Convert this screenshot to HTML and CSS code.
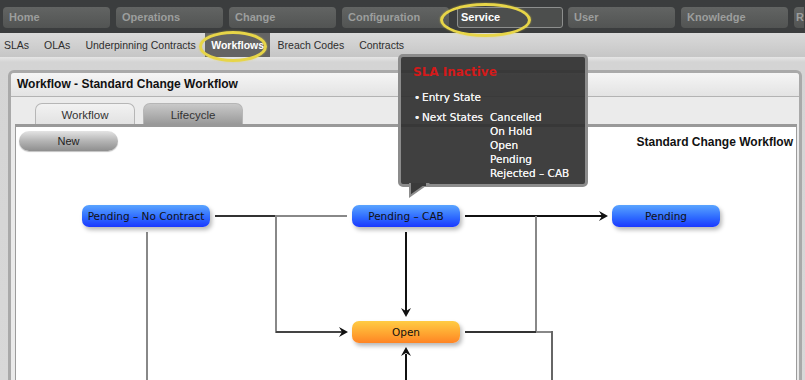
FILE: index.html
```html
<!DOCTYPE html>
<html lang="en">
<head>
    <meta charset="UTF-8">
    <title>Workflow - Standard Change Workflow</title>
    <link rel="stylesheet" href="styles.css">
</head>
<body>
    <div class="topnav">
        <div class="tab">Home</div>
        <div class="tab">Operations</div>
        <div class="tab">Change</div>
        <div class="tab">Configuration</div>
        <div class="tab active">Service</div>
        <div class="tab">User</div>
        <div class="tab">Knowledge</div>
        <div class="tab stub">R</div>
    </div>
    <div class="subnav">
        <span class="sub">SLAs</span>
        <span class="sub">OLAs</span>
        <span class="sub">Underpinning Contracts</span>
        <span class="sub current">Workflows</span>
        <span class="sub">Breach Codes</span>
        <span class="sub">Contracts</span>
    </div>

    <div class="main">
        <div class="panel">
            <div class="panel-head">Workflow - Standard Change Workflow</div>
            <div class="panel-body">
                <div class="tabs">
                    <div class="ptab on">Workflow</div>
                    <div class="ptab">Lifecycle</div>
                </div>
                <div class="content">
                    <div class="toolbar">
                        <button class="new-btn">New</button>
                        <span class="wf-name">Standard Change Workflow</span>
                    </div>
                    <div class="diagram">
                        <svg class="wires" width="780" height="229" viewBox="0 0 780 229">
                            <!-- from Pending - No Contract -->
                            <path d="M199 65H260" stroke="#333" stroke-width="2" fill="none"/>
                            <path d="M260 65H331" stroke="#888" stroke-width="2" fill="none"/>
                            <path d="M260 64V182" stroke="#888" stroke-width="2" fill="none"/>
                            <path d="M260 181H326" stroke="#444" stroke-width="2" fill="none"/>
                            <polygon points="332,181 323,176 326,181 323,186" fill="#111"/>
                            <path d="M131 81V229" stroke="#888" stroke-width="2" fill="none"/>
                            <!-- from Pending - CAB -->
                            <path d="M390 81V160" stroke="#111" stroke-width="2" fill="none"/>
                            <polygon points="390,166 385,157 390,160 395,157" fill="#111"/>
                            <path d="M449 65H586" stroke="#111" stroke-width="2" fill="none"/>
                            <polygon points="592,65 583,60 586,65 583,70" fill="#111"/>
                            <path d="M520 65V182" stroke="#888" stroke-width="2" fill="none"/>
                            <!-- from Open -->
                            <path d="M449 181H520" stroke="#333" stroke-width="2" fill="none"/>
                            <path d="M520 181H537" stroke="#888" stroke-width="2" fill="none"/>
                            <path d="M536 180V229" stroke="#666" stroke-width="2" fill="none"/>
                            <path d="M390 229V203" stroke="#111" stroke-width="2" fill="none"/>
                            <polygon points="390,196 385,205 390,202 395,205" fill="#111"/>
                        </svg>
                        <div class="node blue" style="left: 66px; top: 54px; width: 128px;">Pending &ndash; No Contract</div>
                        <div class="node blue" style="left: 336px; top: 54px; width: 108px;">Pending &ndash; CAB</div>
                        <div class="node blue" style="left: 596px; top: 54px; width: 108px;">Pending</div>
                        <div class="node orange" style="left: 336px; top: 170px; width: 108px;">Open</div>
                    </div>
                </div>
            </div>
        </div>
    </div>

    <div class="tooltip">
        <div class="tip-title">SLA Inactive</div>
        <div class="tip-row first"><span class="dot">&bull;</span>Entry State</div>
        <div class="tip-row states">
            <span class="label"><span class="dot">&bull;</span>Next States</span>
            <ul class="state-list">
                <li>Cancelled</li>
                <li>On Hold</li>
                <li>Open</li>
                <li>Pending</li>
                <li>Rejected &ndash; CAB</li>
            </ul>
        </div>
        <svg class="tip-arrow" width="30" height="16" viewBox="0 0 30 16">
            <polygon points="9,1 26,1 9,13" fill="#3b3b3b" stroke="#8c8c8c" stroke-width="2"/>
            <rect x="10" y="0" width="15" height="3" fill="#3b3b3b"/>
        </svg>
    </div>

    <div class="ring ring-service"></div>
    <div class="ring ring-workflows"></div>
</body>
</html>
```

FILE: styles.css
```css
* {
    margin: 0;
    padding: 0;
    box-sizing: border-box;
}

body {
    width: 805px;
    height: 380px;
    overflow: hidden;
    background: #d6d6d6;
    font-family: 'Liberation Sans', Arial, sans-serif;
    position: relative;
}

/* top navigation */
.topnav {
    height: 33px;
    background: #3b3d3e;
    display: flex;
    gap: 6px;
    padding: 7px 0 0 3px;
    white-space: nowrap;
    overflow: hidden;
}

.tab {
    flex: 0 0 107px;
    height: 21px;
    border-radius: 4px;
    background: linear-gradient(#626463, #525453);
    color: #9c9e9d;
    font-size: 11px;
    font-weight: bold;
    line-height: 21px;
    padding-left: 6px;
}

.tab.stub {
    flex-basis: 10px;
    padding-left: 2px;
    border-radius: 4px 0 0 4px;
}

.tab.active {
    background: #4c4e4d;
    border: 1px solid #8d8f8e;
    color: #ffffff;
    line-height: 19px;
    padding-left: 3px;
    border-radius: 3px;
    flex-basis: 106px;
    margin-left: 2px;
    margin-right: -1px;
}

/* sub navigation */
.subnav {
    height: 24px;
    background: linear-gradient(#dadada, #c6c6c6);
    display: flex;
}

.sub {
    font-size: 10.5px;
    color: #2e2e2e;
    line-height: 24px;
    padding: 0 7.5px;
}

.sub:first-child {
    padding-left: 4px;
}

.sub.current {
    background: #646464;
    color: #ffffff;
    font-weight: bold;
    padding: 0 6px;
    margin: 0 0 0 2px;
}

.main {
    height: 323px;
    background: linear-gradient(#e6e6e6 0, #d4d4d4 5px, #d8d8d8 100%);
    padding: 13px 3px 0 8px;
}

/* panel */
.panel {
    height: 100%;
    border: 3px solid #a9a9a9;
    border-bottom: none;
    border-radius: 6px 6px 0 0;
    display: flex;
    flex-direction: column;
}

.panel-head {
    height: 24px;
    background: linear-gradient(#f5f5f5, #e3e3e3);
    border-bottom: 1px solid #b3b3b3;
    border-radius: 3px 3px 0 0;
    font-size: 12px;
    font-weight: bold;
    color: #111;
    line-height: 23px;
    padding-left: 6px;
}

.panel-body {
    flex: 1;
    background: #ebebeb;
    padding: 0 2px 0 4px;
    display: flex;
    flex-direction: column;
}

.tabs {
    display: flex;
    gap: 8px;
    padding: 6px 0 0 20px;
}

.ptab {
    width: 100px;
    height: 21px;
    border-radius: 7px 7px 0 0;
    font-size: 11.5px;
    color: #333;
    text-align: center;
    line-height: 22px;
    border: 1px solid #b6b6b6;
    border-bottom: none;
    background: linear-gradient(#c9c9c9, #9a9a9a);
}

.ptab.on {
    background: linear-gradient(#f2f2f2, #e2e2e2);
}

.content {
    flex: 1;
    background: #ffffff;
    border-top: 3px solid #999999;
    border-left: 1px solid #9c9c9c;
    border-right: 1px solid #9c9c9c;
}

.toolbar {
    height: 24px;
    display: flex;
    align-items: center;
    justify-content: space-between;
    padding: 4px 3px 0 3px;
}

.new-btn {
    width: 99px;
    height: 20px;
    border: none;
    border-radius: 10px;
    background: linear-gradient(#e4e4e4, #b4b4b4 50%, #8e8e8e);
    box-shadow: 0 1px 1px rgba(0, 0, 0, 0.25);
    font-family: 'Liberation Sans', Arial, sans-serif;
    font-size: 11px;
    color: #222;
}

.wf-name {
    font-size: 12px;
    font-weight: bold;
    color: #111;
    margin-top: 2px;
}

/* diagram */
.diagram {
    position: relative;
    height: 229px;
}

.wires {
    position: absolute;
    left: 0;
    top: 0;
}

.node {
    position: absolute;
    height: 22px;
    border-radius: 7px;
    font-family: 'DejaVu Sans', Verdana, sans-serif;
    font-size: 10.5px;
    color: #111;
    text-align: center;
    line-height: 22px;
    box-shadow: 2px 3px 4px rgba(0, 0, 0, 0.28);
}

.node.blue {
    background: linear-gradient(#5aa4ff, #2f6cff 55%, #1b38ff);
}

.node.orange {
    background: linear-gradient(#ffcc44, #ffa631 55%, #ff8424);
}

/* tooltip */
.tooltip {
    position: absolute;
    left: 398px;
    top: 54px;
    width: 190px;
    height: 133px;
    background: rgba(48, 48, 48, 0.92);
    border: 3px solid #8c8c8c;
    border-radius: 5px;
    padding: 7px 0 0 12px;
    font-family: 'DejaVu Sans', Verdana, sans-serif;
    font-size: 10.5px;
    color: #f2f2f2;
    text-shadow: 0 0 0.4px #f2f2f2;
}

.tip-title {
    color: #d41a1a;
    font-size: 12px;
    font-weight: bold;
    text-shadow: none;
    line-height: 16px;
    margin-bottom: 10px;
}

.tip-row {
    line-height: 14px;
    display: flex;
}

.tip-row.first {
    margin-bottom: 6px;
}

.dot {
    display: inline-block;
    width: 8px;
    margin-left: 1px;
}

.label {
    width: 77px;
}

.state-list {
    list-style: none;
}

.tip-arrow {
    position: absolute;
    left: 0;
    bottom: -15px;
}

/* highlight rings */
.ring {
    position: absolute;
    border: 3px solid #e7d548;
    border-radius: 50%;
    box-shadow: 0 0 2px rgba(231, 213, 72, 0.6);
}

.ring-service {
    left: 440px;
    top: 3px;
    width: 91px;
    height: 34px;
}

.ring-workflows {
    left: 199px;
    top: 31px;
    width: 68px;
    height: 31px;
}
```
